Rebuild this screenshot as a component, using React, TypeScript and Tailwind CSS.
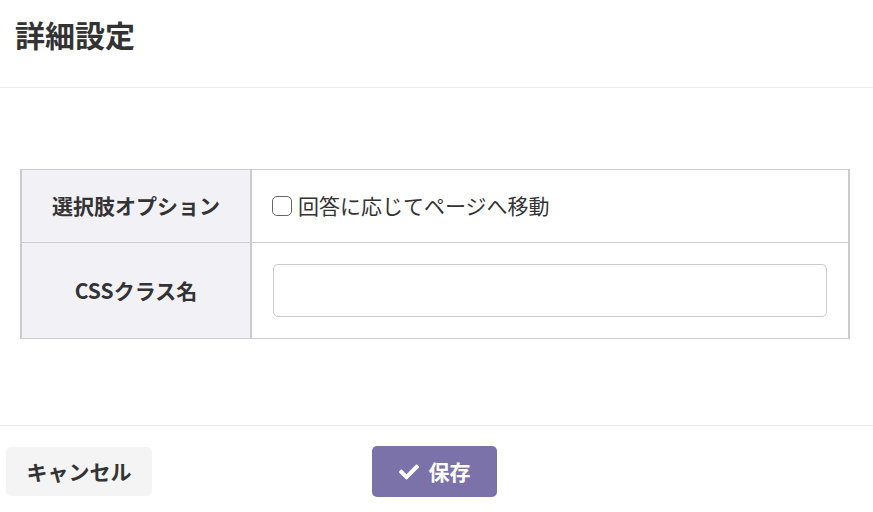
import React from 'react';
import { FaCheck } from 'react-icons/fa';

const font = { fontFamily: '"Noto Sans CJK JP", "Noto Sans", sans-serif' };

const App: React.FC = () => {
  return (
    <div className="w-[873px] h-[512px] bg-white text-[#333] overflow-hidden" style={font}>
      {/* ヘッダー */}
      <div className="h-[88px] border-b border-[#ececec] pl-[15px] pt-[12px]">
        <h2 className="text-[30px] font-bold leading-[44px] text-[#333]">詳細設定</h2>
      </div>

      {/* 設定テーブル */}
      <div className="h-[337px] pt-[81px] pl-[20px]">
        <div className="w-[830px] border border-[#cccccc] border-l-2 border-r-2">
          <div className="flex h-[73px] border-b border-[#cccccc]">
            <div className="w-[230px] shrink-0 bg-[#f2f1f6] border-r-2 border-[#cccccc] flex items-center justify-center text-[21px] font-bold">
              選択肢オプション
            </div>
            <label className="flex-1 flex items-center pl-[20px] text-[21px]">
              <span className="w-[20px] h-[20px] rounded-[5px] border-[1.5px] border-[#666] mr-[6px] bg-white" />
              回答に応じてページへ移動
            </label>
          </div>
          <div className="flex h-[95px]">
            <div className="w-[230px] shrink-0 bg-[#f2f1f6] border-r-2 border-[#cccccc] flex items-center justify-center text-[21px] font-bold">
              CSSクラス名
            </div>
            <div className="flex-1 flex items-center pl-[21px] pr-[21px]">
              <input
                type="text"
                className="w-full h-[53px] rounded-[5px] border border-[#cccccc] px-3 outline-none"
              />
            </div>
          </div>
        </div>
      </div>

      {/* フッター */}
      <div className="border-t border-[#ececec] flex items-start pt-[21px] pl-[6px]">
        <button className="w-[146px] h-[49px] rounded-[5px] bg-[#f4f4f4] text-[21px] font-bold text-[#333] flex items-center justify-center">
          キャンセル
        </button>
        <button className="ml-[220px] -mt-[1px] w-[125px] h-[51px] rounded-[5px] bg-[#7b72aa] text-white text-[21px] font-bold flex items-center justify-center gap-[10px]">
          <FaCheck className="w-[20px] h-[20px]" />
          保存
        </button>
      </div>
    </div>
  );
};

export default App;
